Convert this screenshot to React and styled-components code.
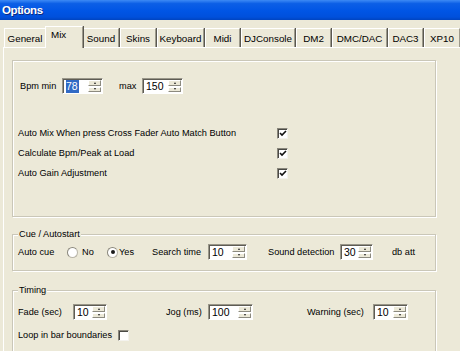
import React from 'react';
import styled, { createGlobalStyle } from 'styled-components';

const Global = createGlobalStyle`
    html, body {
        margin: 0;
        padding: 0;
        background: #ece9d8;
    }
    body {
        font-family: 'Liberation Sans', Arial, sans-serif;
        font-size: 9.2px;
        color: #000;
    }
`;

const Window = styled.div`
    width: 460px;
    height: 351px;
    overflow: hidden;
    display: flex;
    flex-direction: column;
    background: #ece9d8;
`;
const TitleBar = styled.div`
    height: 20px;
    flex: none;
    display: flex;
    align-items: center;
    padding-left: 2px;
    background: linear-gradient(
        180deg,
        #3d8af5 0%,
        #0c5fe6 18%,
        #0055e5 55%,
        #0050dc 85%,
        #0044c0 100%
    );
    color: #fff;
    font-weight: bold;
    font-size: 11.5px;
    letter-spacing: -0.4px;
    text-shadow: 1px 1px 0 #0a2a80;
`;
const TabStrip = styled.div`
    display: flex;
    align-items: flex-end;
    height: 21px;
    margin-top: 6px;
    padding-left: 3px;
    position: relative;
    z-index: 2;
`;
const Tab = styled.div`
    box-sizing: border-box;
    flex: none;
    width: ${(p) => p.$w}px;
    height: ${(p) => (p.$active ? 22 : 19)}px;
    margin-bottom: ${(p) => (p.$active ? -1 : 0)}px;
    margin-left: ${(p) => (p.$active ? -1 : 1)}px;
    margin-right: ${(p) => (p.$active ? -1 : 0)}px;
    padding-left: ${(p) => (p.$active ? 5 : 0)}px;
    display: flex;
    align-items: ${(p) => (p.$active ? 'flex-start' : 'center')};
    justify-content: ${(p) => (p.$active ? 'flex-start' : 'center')};
    padding-top: ${(p) => (p.$active ? 2 : 0)}px;
    background: #ece9d8;
    border-top: 1px solid #fff;
    border-left: 1px solid #fff;
    border-right: 1px solid #9d9a8c;
    box-shadow: 1px 0 0 #5a5850;
    white-space: nowrap;
    font-size: 9.8px;
    z-index: ${(p) => (p.$active ? 2 : 1)};
`;
const Panel = styled.div`
    flex: 1;
    margin-left: 3px;
    width: 480px;
    border-left: 1px solid #fff;
    border-top: 1px solid #fff;
    display: flex;
    flex-direction: column;
    padding: 12px 0 0 8px;
`;
const GroupBox = styled.div`
    position: relative;
    box-sizing: border-box;
    width: 424px;
    height: ${(p) => p.$h}px;
    margin-top: ${(p) => p.$mt || 0}px;
    border: 1px solid #cac7b8;
    box-shadow: inset 1px 1px 0 #fff, 1px 1px 0 #fff;
    padding: 0 5px;
    display: flex;
    flex-direction: column;
    flex: none;
`;
const Legend = styled.span`
    position: absolute;
    top: -7px;
    left: 5px;
    padding: 0 1px;
    line-height: 12px;
    background: #ece9d8;
`;
const Row = styled.div`
    display: flex;
    align-items: center;
    height: ${(p) => p.$h || 16}px;
    margin-top: ${(p) => p.$mt || 0}px;
    flex: none;
`;
const Cell = styled.span`
    flex: none;
    width: ${(p) => p.$w}px;
    padding-left: ${(p) => p.$pl || 0}px;
    box-sizing: border-box;
    white-space: nowrap;
`;

const SpinWrap = styled.div`
    flex: none;
    box-sizing: border-box;
    width: ${(p) => p.$w}px;
    height: 16px;
    display: flex;
    background: #fff;
    border-top: 1px solid #9a978a;
    border-left: 1px solid #9a978a;
    border-right: 1px solid #fff;
    border-bottom: 1px solid #fff;
    box-shadow: inset 1px 1px 0 #5e5c54;
    padding: 1px 1px 1px 2px;
`;
const SpinValue = styled.div`
    flex: 1;
    display: flex;
    align-items: center;
    font-size: 10.5px;
    padding-left: 1px;
`;
const Selected = styled.span`
    background: #316ac5;
    color: #fff;
    line-height: 13px;
    padding-right: 1px;
`;
const SpinButtons = styled.div`
    width: 13px;
    display: flex;
    flex-direction: column;
    gap: 1px;
`;
const SpinBtn = styled.div`
    flex: 1;
    box-sizing: border-box;
    background: #ece9d8;
    border-top: 1px solid #fff;
    border-left: 1px solid #fff;
    border-right: 1px solid #8c8a7f;
    border-bottom: 1px solid #8c8a7f;
    display: flex;
    align-items: center;
    justify-content: center;
    &::after {
        content: '';
        width: 0;
        height: 0;
        border-left: 1.5px solid transparent;
        border-right: 1.5px solid transparent;
        ${(p) =>
            p.$up
                ? 'border-bottom: 2px solid #222;'
                : 'border-top: 2px solid #222;'}
    }
`;

const CheckBox = styled.span`
    flex: none;
    box-sizing: border-box;
    width: 11px;
    height: 11px;
    background: #fff;
    border-top: 1px solid #8a877c;
    border-left: 1px solid #8a877c;
    border-right: 1px solid #f4f3ee;
    border-bottom: 1px solid #f4f3ee;
    box-shadow: inset 1px 1px 0 #4a4944;
    display: flex;
    align-items: center;
    justify-content: center;
`;
const Radio = styled.span`
    flex: none;
    box-sizing: border-box;
    width: 11px;
    height: 11px;
    border-radius: 50%;
    background: #fff;
    border: 1px solid #b8b5a8;
    border-top-color: #8a877c;
    border-left-color: #8a877c;
    display: flex;
    align-items: center;
    justify-content: center;
    &::after {
        content: '';
        width: 4px;
        height: 4px;
        border-radius: 50%;
        background: ${(p) => (p.$on ? '#1a1a1a' : 'transparent')};
    }
`;

const Spin = ({ w, value, selected }) => (
    <SpinWrap $w={w}>
        <SpinValue>{selected ? <Selected>{value}</Selected> : value}</SpinValue>
        <SpinButtons>
            <SpinBtn $up />
            <SpinBtn />
        </SpinButtons>
    </SpinWrap>
);

const Check = ({ on }) => (
    <CheckBox>
        {on && (
            <svg width="8" height="7" viewBox="0 0 8 7">
                <path
                    d="M1 3 L3 5 L7 1"
                    fill="none"
                    stroke="#111"
                    strokeWidth="1.6"
                />
            </svg>
        )}
    </CheckBox>
);

const tabs = [
    ['General', 42],
    ['Mix', 38, true],
    ['Sound', 36],
    ['Skins', 36],
    ['Keyboard', 47],
    ['Midi', 35],
    ['DJConsole', 54],
    ['DM2', 35],
    ['DMC/DAC', 55],
    ['DAC3', 35],
    ['XP10', 36],
];

const options = [
    'Auto Mix When press Cross Fader Auto Match Button',
    'Calculate Bpm/Peak at Load',
    'Auto Gain Adjustment',
];

export default function App() {
    return (
        <Window>
            <Global />
            <TitleBar>Options</TitleBar>
            <TabStrip>
                {tabs.map(([label, w, active]) => (
                    <Tab key={label} $w={w} $active={active}>
                        {label}
                    </Tab>
                ))}
            </TabStrip>
            <Panel>
                <GroupBox $h={157}>
                    <Row $mt={17}>
                        <Cell $w={44} $pl={2}>Bpm min</Cell>
                        <Spin w={41} value="78" selected />
                        <Cell $w={16} />
                        <Cell $w={23}>max</Cell>
                        <Spin w={41} value="150" />
                    </Row>
                    <Row $mt={29} $h={20}>
                        <Cell $w={259}>{options[0]}</Cell>
                        <Check on />
                    </Row>
                    {options.slice(1).map((o) => (
                        <Row key={o} $h={20}>
                            <Cell $w={259}>{o}</Cell>
                            <Check on />
                        </Row>
                    ))}
                </GroupBox>

                <GroupBox $h={37} $mt={17}>
                    <Legend>Cue / Autostart</Legend>
                    <Row $mt={9}>
                        <Cell $w={49}>Auto cue</Cell>
                        <Radio />
                        <Cell $w={4} />
                        <Cell $w={25}>No</Cell>
                        <Radio $on />
                        <Cell $w={1} />
                        <Cell $w={33}>Yes</Cell>
                        <Cell $w={56}>Search time</Cell>
                        <Spin w={39} value="10" />
                        <Cell $w={21} />
                        <Cell $w={72}>Sound detection</Cell>
                        <Spin w={33} value="30" />
                        <Cell $w={19} />
                        <Cell $w={40}>db att</Cell>
                    </Row>
                </GroupBox>

                <GroupBox $h={80} $mt={19}>
                    <Legend>Timing</Legend>
                    <Row $mt={13}>
                        <Cell $w={55}>Fade (sec)</Cell>
                        <Spin w={34} value="10" />
                        <Cell $w={59} />
                        <Cell $w={42}>Jog (ms)</Cell>
                        <Spin w={45} value="100" />
                        <Cell $w={54} />
                        <Cell $w={66}>Warning (sec)</Cell>
                        <Spin w={35} value="10" />
                    </Row>
                    <Row $mt={7}>
                        <Cell $w={100}>Loop in bar boundaries</Cell>
                        <Check />
                    </Row>
                </GroupBox>
            </Panel>
        </Window>
    );
}
